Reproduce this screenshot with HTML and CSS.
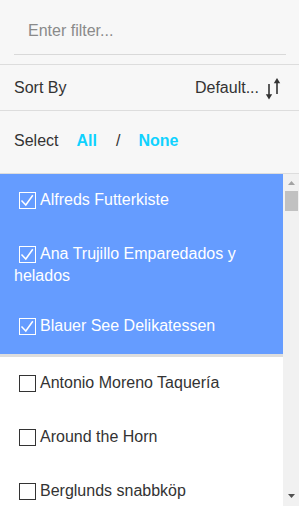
FILE: index.html
```html
<!DOCTYPE html>
<html lang="en">
<head>
<meta charset="utf-8">
<title>Customer filter</title>
<link rel="stylesheet" href="styles.css">
</head>
<body>
<div class="app">
  <div class="filter">
    <input class="filter-input" type="text" placeholder="Enter filter...">
  </div>
  <div class="sort-row">
    <span class="label">Sort By</span>
    <span class="sort-value">Default...
      <svg class="sort-icon" width="17" height="22" viewBox="0 0 17 22" aria-hidden="true">
        <path d="M4 6V19" stroke="#333" stroke-width="1.6" fill="none"/>
        <path d="M0.8 16.2H7.2L4 21.5Z" fill="#333"/>
        <path d="M12 16V3" stroke="#333" stroke-width="1.6" fill="none"/>
        <path d="M8.8 5.3H15.2L12 0Z" fill="#333"/>
      </svg>
    </span>
  </div>
  <div class="select-row">
    <span class="label">Select</span>
    <a class="link link-all">All</a>
    <span class="slash">/</span>
    <a class="link">None</a>
  </div>
  <div class="list-area">
  <div class="list">
    <div class="group selected">
      <div class="item"><span class="box"><svg width="15" height="15" viewBox="0 0 15 15"><path d="M1.5 7.5L5.8 12L12.8 2.2" stroke="#fff" stroke-width="1.5" fill="none"/></svg></span>Alfreds Futterkiste</div>
      <div class="item"><span class="box"><svg width="15" height="15" viewBox="0 0 15 15"><path d="M1.5 7.5L5.8 12L12.8 2.2" stroke="#fff" stroke-width="1.5" fill="none"/></svg></span>Ana Trujillo Emparedados y helados</div>
      <div class="item"><span class="box"><svg width="15" height="15" viewBox="0 0 15 15"><path d="M1.5 7.5L5.8 12L12.8 2.2" stroke="#fff" stroke-width="1.5" fill="none"/></svg></span>Blauer See Delikatessen</div>
    </div>
    <div class="group">
      <div class="item"><span class="box"></span>Antonio Moreno Taquería</div>
      <div class="item"><span class="box"></span>Around the Horn</div>
      <div class="item"><span class="box"></span>Berglunds snabbköp</div>
    </div>
  </div>
  <div class="scrollbar" aria-hidden="true">
    <div class="sb-btn sb-up"><svg width="7" height="4" viewBox="0 0 7 4"><path d="M0 4L3.5 0L7 4Z" fill="#a3a3a3"/></svg></div>
    <div class="sb-track"><div class="sb-thumb"></div></div>
    <div class="sb-btn sb-down"><svg width="7" height="4" viewBox="0 0 7 4"><path d="M0 0L7 0L3.5 4Z" fill="#505050"/></svg></div>
  </div>
  </div>
</div>
</body>
</html>
```
FILE: styles.css
```css
* { box-sizing: border-box; }
html, body {
  margin: 0;
  padding: 0;
  height: 100%;
}
body {
  font-family: "Liberation Sans", Arial, sans-serif;
  font-size: 16px;
  color: #333;
  background: #f7f7f7;
  overflow: hidden;
}
.app {
  height: 100vh;
  display: flex;
  flex-direction: column;
}
.filter {
  padding: 14px 13px 9px 14px;
  border-bottom: 1px solid #dddddd;
  flex: none;
}
.filter-input {
  display: block;
  width: 100%;
  height: 41px;
  margin: 0;
  padding: 0 0 7px 14px;
  border: none;
  border-bottom: 1px solid #d9d9d9;
  background: transparent;
  font-family: inherit;
  font-size: 16px;
  color: #333;
  outline: none;
}
.filter-input::placeholder { color: #8a8a8a; opacity: 1; }
.sort-row {
  flex: none;
  height: 46px;
  padding: 0 17px 0 14px;
  display: flex;
  align-items: center;
  justify-content: space-between;
  border-bottom: 1px solid #dddddd;
}
.sort-value {
  display: flex;
  align-items: center;
}
.sort-icon {
  margin-left: 6px;
  margin-top: 2px;
}
.select-row {
  flex: none;
  height: 63px;
  padding: 0 14px 3px 14px;
  display: flex;
  align-items: center;
  border-bottom: 1px solid #dddddd;
}
.select-row .label { margin-right: 18px; }
.link {
  color: #0fd2ff;
  font-weight: bold;
  cursor: pointer;
}
.slash { margin: 0 18px 0 19px; }
.list-area {
  flex: 1;
  min-height: 0;
  display: flex;
}
.list {
  flex: 1;
  min-width: 0;
  overflow: hidden;
  background: #fff;
}
.scrollbar {
  flex: none;
  width: 16px;
  display: flex;
  flex-direction: column;
  background: #f1f1f1;
}
.sb-btn {
  flex: none;
  height: 16px;
  display: flex;
  justify-content: center;
  padding-left: 1px;
}
.sb-btn svg { display: block; }
.sb-up { padding-top: 7px; }
.sb-down { padding-top: 4px; }
.sb-track {
  flex: 1;
  padding: 1px 1px 0 2px;
}
.sb-thumb {
  height: 20px;
  background: #c1c1c1;
}
.group.selected {
  background: #659cff;
  color: #fff;
  border-bottom: 3px solid #dddddd;
}
.item {
  padding: 15px 14px;
  line-height: 18px;
}
.box {
  display: inline-block;
  width: 17px;
  height: 17px;
  margin: 3px 4px 4px 5px;
  border: 1px solid #333;
  vertical-align: -8px;
}
.selected .box { border-color: #fff; }
.box svg {
  display: block;
  width: 15px;
  height: 15px;
}
```
